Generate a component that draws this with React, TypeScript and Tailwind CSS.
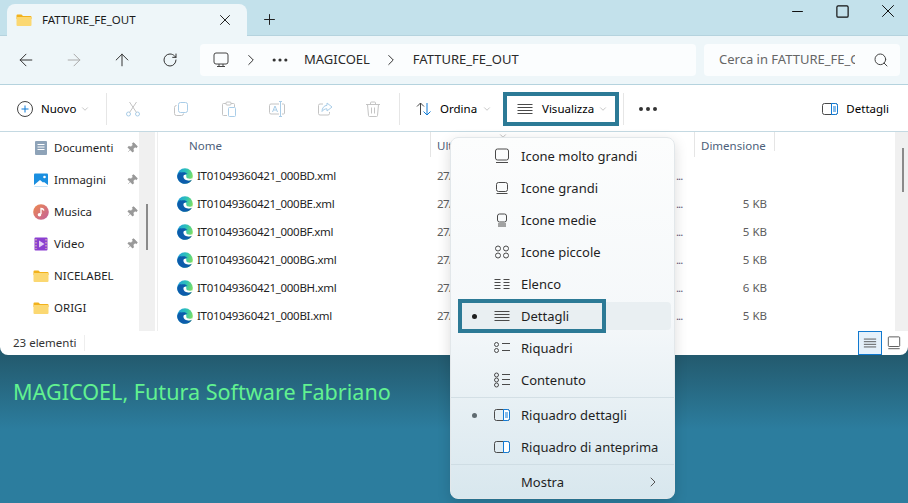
import { ReactNode } from 'react';
import {
  ArrowLeft,
  ArrowRight,
  ArrowUp,
  ChevronDown,
  ChevronRight,
  Ellipsis,
  Minus,
  Pin,
  Plus,
  RotateCw,
  Search,
  Square,
  X,
} from 'lucide-react';

const files = [
  { name: 'IT01049360421_000BD.xml', size: '' },
  { name: 'IT01049360421_000BE.xml', size: '5 KB' },
  { name: 'IT01049360421_000BF.xml', size: '5 KB' },
  { name: 'IT01049360421_000BG.xml', size: '5 KB' },
  { name: 'IT01049360421_000BH.xml', size: '6 KB' },
  { name: 'IT01049360421_000BI.xml', size: '5 KB' },
];

function Svg({ size = 16, children }: { size?: number; children: ReactNode }) {
  return (
    <svg width={size} height={size} viewBox="0 0 16 16" fill="none" stroke="#4a4a4a" strokeWidth="1" className="shrink-0">
      {children}
    </svg>
  );
}

function FolderIcon({ size = 16 }: { size?: number }) {
  return (
    <svg width={size} height={size} viewBox="0 0 16 16" className="shrink-0">
      <path d="M0.5 3.5a1 1 0 0 1 1-1h4l1.5 1.5h7.5a1 1 0 0 1 1 1V7H0.5z" fill="#f2b21c" />
      <rect x="0.5" y="5" width="15" height="9" rx="1" fill="#fbd872" />
    </svg>
  );
}

function EdgeIcon() {
  return (
    <svg width="16" height="16" viewBox="0 0 16 16" className="shrink-0">
      <defs>
        <linearGradient id="edgeTop" x1="0" y1="0.2" x2="1" y2="0.5">
          <stop offset="0" stopColor="#1f9fe0" />
          <stop offset="0.55" stopColor="#2fc4b4" />
          <stop offset="1" stopColor="#7fe060" />
        </linearGradient>
      </defs>
      <circle cx="8" cy="8" r="7.8" fill="url(#edgeTop)" />
      <path d="M0.2 8C0.2 12.5 3.8 15.8 8 15.8c3 0 5.5-1.6 6.9-4-1.5.8-3.5.9-5 .2-2-.9-3-3-2.3-4.6.5-1.2 1.8-1.8 3-1.6-1.6-1.6-4-2-6-1.2C2.5 3.6.8 5.5.2 8z" fill="#0c5cab" />
      <path d="M6.6 7.4c-.7 1.6.3 3.7 2.3 4.6 1.5.7 4.2.6 6-.2.4-.7.7-1.2.8-1.8-1 .7-3.2.9-4.4.6-1.5-.4-2.2-1.4-2-2.4.1-.6 0-1.1-.4-1.4-.8-.3-2 -.1-2.3.6z" fill="#ffffff" />
    </svg>
  );
}

// view mode glyphs used by the menu and the command bar
const DetailsGlyph = (
  <Svg>
    <path d="M0.5 3.5h15M0.5 6.5h15M0.5 9.5h15M0.5 12.5h15" />
  </Svg>
);

const PaneGlyph = ({ lines }: { lines?: boolean }) => (
  <Svg>
    <rect x="0.5" y="2.5" width="15" height="11" rx="2" />
    <path d="M9.5 2.5v11h4a2 2 0 0 0 2-2v-7a2 2 0 0 0-2-2z" fill="#fff" stroke="#0f7ad6" />
    {lines && <path d="M11 6h3M11 8h3M11 10h3" stroke="#0f7ad6" />}
  </Svg>
);

const menuViews: { label: string; icon: ReactNode; active?: boolean }[] = [
  {
    label: 'Icone molto grandi',
    icon: (
      <Svg>
        <rect x="1.5" y="1" width="13" height="11" rx="2" />
        <path d="M2 14.5h12" />
      </Svg>
    ),
  },
  {
    label: 'Icone grandi',
    icon: (
      <Svg>
        <rect x="2.5" y="2.5" width="11" height="9" rx="2" />
        <path d="M2.5 13.5h11" />
      </Svg>
    ),
  },
  {
    label: 'Icone medie',
    icon: (
      <Svg>
        <rect x="3.5" y="2" width="9" height="8" rx="2" />
        <path d="M4 12h8M4 14h8" />
      </Svg>
    ),
  },
  {
    label: 'Icone piccole',
    icon: (
      <Svg>
        <circle cx="4" cy="4.5" r="2.5" />
        <circle cx="12" cy="4.5" r="2.5" />
        <circle cx="4" cy="11.5" r="2.5" />
        <circle cx="12" cy="11.5" r="2.5" />
      </Svg>
    ),
  },
  {
    label: 'Elenco',
    icon: (
      <Svg>
        <path d="M0.5 3.5h6M0.5 6.5h6M0.5 9.5h6M0.5 12.5h6M9.5 3.5h6M9.5 6.5h6M9.5 9.5h6M9.5 12.5h6" />
      </Svg>
    ),
  },
  { label: 'Dettagli', icon: DetailsGlyph, active: true },
  {
    label: 'Riquadri',
    icon: (
      <Svg>
        <circle cx="2.5" cy="4.5" r="2" />
        <circle cx="2.5" cy="10.5" r="2" />
        <path d="M8 3.5h8M8 10.5h8" />
      </Svg>
    ),
  },
  {
    label: 'Contenuto',
    icon: (
      <Svg>
        <circle cx="2.5" cy="3" r="2" />
        <circle cx="2.5" cy="8" r="2" />
        <circle cx="2.5" cy="13" r="2" />
        <path d="M8 2.5h8M8 7.5h8M8 12.5h8" />
      </Svg>
    ),
  },
];

function MenuRow({ label, icon, dot, active }: { label: string; icon?: ReactNode; dot?: string; active?: boolean }) {
  return (
    <div className="h-8 py-0.5 pl-[7px] pr-[3px]">
      <div className={`flex h-7 items-center rounded ${active ? 'bg-[#e9eff2]' : ''}`}>
        <div className="w-[36px] flex justify-center pr-[3px]">
          {dot && <span className={`w-[5px] h-[5px] rounded-full ${dot}`} />}
        </div>
        <div className="w-4 flex justify-center">{icon}</div>
        <span className="ml-[11px] pt-[2px] text-[#1f1f1f]">{label}</span>
      </div>
    </div>
  );
}

function ViewMenu() {
  return (
    <div className="absolute left-[450px] top-[137px] w-[225px] h-[362px] rounded-lg border border-[#e2e7ea] bg-gradient-to-b from-[#fcfdfd] via-[#f5f8fa] to-[#d8e7ee] shadow-[0_4px_14px_rgba(0,0,0,0.14)] pt-[2px] text-[13px]">
      {menuViews.map((v) => (
        <MenuRow key={v.label} label={v.label} icon={v.icon} active={v.active} dot={v.active ? 'bg-[#1f1f1f]' : undefined} />
      ))}
      <div className="h-px bg-[#d3dfe5] mt-px mb-px" />
      <MenuRow label="Riquadro dettagli" icon={<PaneGlyph lines />} dot="bg-[#5f6a70]" />
      <MenuRow label="Riquadro di anteprima" icon={<PaneGlyph />} />
      <div className="h-px bg-[#cfdde4] mt-px mb-px" />
      <div className="relative">
        <MenuRow label="Mostra" />
        <ChevronRight size={16} strokeWidth={1} absoluteStrokeWidth color="#555" className="absolute right-[13px] top-[8px]" />
      </div>
      {/* highlight frame around the selected view */}
      <div className="absolute left-[7px] top-[161px] w-[148px] h-[34px] border-4 border-[#2c7a96]" />
    </div>
  );
}

function CommandIcon({ children }: { children: ReactNode }) {
  return <div className="w-12 flex justify-center">{children}</div>;
}

function CommandBar() {
  return (
    <div className="flex h-[47px] items-center border-b border-[#c4d9e2] bg-white pl-[17px] pt-px shrink-0">
      <svg width="16" height="16" viewBox="0 0 16 16" fill="none" className="shrink-0">
        <circle cx="8" cy="8" r="7.5" stroke="#444" />
        <path d="M8 4.5v7M4.5 8h7" stroke="#0f7ad6" />
      </svg>
      <span className="ml-2 w-[36px]">Nuovo</span>
      <ChevronDown size={10} strokeWidth={1} color="#777" className="ml-[3px]" />
      <div className="ml-[16px] w-px h-8 bg-[#e6e6e6]" />
      <div className="flex ml-[2px] w-[290px]">
        <CommandIcon>
          <svg width="16" height="16" viewBox="0 0 16 16" fill="none" stroke="#a9cde8">
            <circle cx="3.5" cy="13" r="2" />
            <circle cx="12.5" cy="13" r="2" />
            <path d="M4.5 11.5L11.5 1M11.5 11.5L4.5 1" stroke="#c4c4c4" />
          </svg>
        </CommandIcon>
        <CommandIcon>
          <svg width="16" height="16" viewBox="0 0 16 16" fill="none" stroke="#c4c4c4">
            <rect x="5.5" y="1.5" width="9" height="10" rx="2" stroke="#a9cde8" />
            <path d="M3.5 4.5A2 2 0 0 0 1.5 6.5v6a2 2 0 0 0 2 2h5a2 2 0 0 0 2-2" />
          </svg>
        </CommandIcon>
        <CommandIcon>
          <svg width="16" height="16" viewBox="0 0 16 16" fill="none" stroke="#c4c4c4">
            <path d="M5 2.5H2.5a1 1 0 0 0-1 1v10a1 1 0 0 0 1 1H6M10 2.5h2.5a1 1 0 0 1 1 1V6" />
            <rect x="5" y="1" width="5" height="3" rx="1" />
            <rect x="7.5" y="6.5" width="7" height="9" rx="1" stroke="#a9cde8" />
          </svg>
        </CommandIcon>
        <CommandIcon>
          <svg width="16" height="16" viewBox="0 0 16 16" fill="none" stroke="#c4c4c4">
            <path d="M10 3H2a1.5 1.5 0 0 0-1.5 1.5v7A1.5 1.5 0 0 0 2 13h8M13 3h1.5a1 1 0 0 1 1 1v8a1 1 0 0 1-1 1H13" />
            <path d="M11.5 1v14M10 .5h3M10 15.5h3" stroke="#a9cde8" />
            <path d="M3.5 11L6 5l2.5 6M4.5 9h3" stroke="#a9cde8" />
          </svg>
        </CommandIcon>
        <CommandIcon>
          <svg width="16" height="16" viewBox="0 0 16 16" fill="none" stroke="#c4c4c4">
            <path d="M6 3H3a1.5 1.5 0 0 0-1.5 1.5v8A1.5 1.5 0 0 0 3 14h8a1.5 1.5 0 0 0 1.5-1.5V11" />
            <path d="M10 2l5 4-5 4V7.8C7.5 7.8 6 9 5 10.5 5 7 7 4.6 10 4.3z" stroke="#a9cde8" />
          </svg>
        </CommandIcon>
        <CommandIcon>
          <svg width="16" height="16" viewBox="0 0 16 16" fill="none" stroke="#c4c4c4">
            <path d="M1 3.5h14M5.5 3.5V2a1 1 0 0 1 1-1h3a1 1 0 0 1 1 1v1.5M2.5 3.5l1 11a1 1 0 0 0 1 1h7a1 1 0 0 0 1-1l1-11M6.5 6.5v6M9.5 6.5v6" />
          </svg>
        </CommandIcon>
      </div>
      <div className="w-px h-8 bg-[#e6e6e6]" />
      <div className="ml-[16px] flex items-center">
        <svg width="16" height="16" viewBox="0 0 16 16" fill="none">
          <path d="M4.5 14V2M1 5.5L4.5 2 8 5.5" stroke="#444" />
          <path d="M11 2v12M7.5 10.5L11 14l3.5-3.5" stroke="#0f7ad6" />
        </svg>
        <span className="ml-2 w-[38px]">Ordina</span>
        <ChevronDown size={10} strokeWidth={1} color="#777" className="ml-[4px]" />
      </div>
      <div className="ml-[11px] flex h-[34px] w-[116px] items-center border-4 border-[#2c7a96] pl-[10px]">
        {DetailsGlyph}
        <span className="ml-[9px] w-[52px]">Visualizza</span>
        <ChevronDown size={10} strokeWidth={1} color="#777" className="ml-[4px]" />
      </div>
      <div className="ml-[4px] w-px h-8 bg-[#e6e6e6]" />
      <Ellipsis size={24} strokeWidth={2} absoluteStrokeWidth color="#333" className="ml-[12px]" />
      <div className="ml-auto mr-[19px] flex items-center">
        <PaneGlyph lines />
        <span className="ml-2">Dettagli</span>
      </div>
    </div>
  );
}

function Sidebar() {
  const items: { label: string; icon: ReactNode; pin?: boolean }[] = [
    {
      label: 'Documenti',
      pin: true,
      icon: (
        <svg width="16" height="16" viewBox="0 0 16 16">
          <rect x="2" y="1" width="12" height="14" rx="1" fill="#8ea3b8" />
          <path d="M4.5 4.5h7M4.5 7h7M4.5 9.5h7" stroke="#fff" />
        </svg>
      ),
    },
    {
      label: 'Immagini',
      pin: true,
      icon: (
        <svg width="16" height="16" viewBox="0 0 16 16">
          <rect x="1" y="1.5" width="14" height="13" rx="1" fill="#1a8fe0" />
          <path d="M1 13l6-5 3 2.5 1-.5 4 3v1.5H1z" fill="#fff" />
          <circle cx="11.5" cy="5" r="1.3" fill="#fff" />
        </svg>
      ),
    },
    {
      label: 'Musica',
      pin: true,
      icon: (
        <svg width="16" height="16" viewBox="0 0 16 16">
          <defs>
            <linearGradient id="musicFill" x1="0" y1="0" x2="1" y2="1">
              <stop offset="0" stopColor="#ee8a4e" />
              <stop offset="1" stopColor="#c25f9c" />
            </linearGradient>
          </defs>
          <circle cx="8" cy="8" r="7.8" fill="url(#musicFill)" />
          <path d="M8 10V4.5c1.5 0 2.5.8 3 2" stroke="#fff" fill="none" strokeWidth="1.3" />
          <circle cx="6.5" cy="10.8" r="1.8" fill="#fff" />
        </svg>
      ),
    },
    {
      label: 'Video',
      pin: true,
      icon: (
        <svg width="16" height="16" viewBox="0 0 16 16">
          <rect x="1.5" y="1.5" width="13" height="13" rx="1" fill="#8b3fd1" />
          <path d="M6 4.5l5.5 3.5L6 11.5z" fill="#e4cff6" />
          <path d="M3 3v10M13 3v10" stroke="#f0d9a0" strokeDasharray="1.5 1.5" />
        </svg>
      ),
    },
    { label: 'NICELABEL', icon: <FolderIcon /> },
    { label: 'ORIGI', icon: <FolderIcon /> },
  ];
  return (
    <div className="w-[139px] shrink-0">
      {items.map((item) => (
        <div key={item.label} className="flex h-8 items-center pl-[33px] text-[#1f1f1f]">
          {item.icon}
          <span className="ml-[5px] w-[70px]">{item.label}</span>
          {item.pin && <Pin size={12} strokeWidth={1} color="#8a8a8a" fill="#9a9a9a" className="ml-[2px] rotate-45" />}
        </div>
      ))}
    </div>
  );
}

function FileList() {
  return (
    <div className="flex-1 min-w-0">
      <div className="flex h-[25px] text-[#4c607a]">
        <div className="w-[273px] border-r border-[#e5e5e5] pl-[31px] pt-[5px]">Nome</div>
        <div className="w-[264px] border-r border-[#e5e5e5] pl-[6px] pt-[5px]">Ult</div>
        <div className="w-[80px] h-[19px] border-r border-[#e5e5e5] pl-[6px] pt-[5px]">Dimensione</div>
      </div>
      <div className="pt-[5px]">
        {files.map((f) => (
          <div key={f.name} className="flex h-7 items-center pl-[19px]">
            <EdgeIcon />
            <span className="ml-[4px] w-[240px] tracking-[-0.3px] text-[#1f1f1f]">{f.name}</span>
            <span className="w-[239px] tracking-[-0.6px] text-[#5d5d5d]">27/</span>
            <span className="w-[20px] tracking-[-1px] text-[#6b5d7a]">...</span>
            <span className="w-[71px] text-right text-[#5d5d5d]">{f.size}</span>
          </div>
        ))}
      </div>
    </div>
  );
}

export default function App() {
  return (
    <div
      className="relative flex h-[503px] w-[908px] flex-col overflow-hidden bg-[#2c7d9e] text-[11.5px]"
      style={{ fontFamily: '"Noto Sans", "Open Sans", sans-serif' }}
    >
      <div className="h-[355px] shrink-0 bg-[#235a6e]">
        <div className="flex h-full flex-col rounded-b-lg bg-white overflow-hidden">
          {/* title bar */}
          <div className="flex h-9 shrink-0 items-end bg-[#c3e1eb] pl-[7px] border-b border-[#b5d3de]">
            <div className="flex h-[32px] w-[240px] items-center rounded-t-lg bg-[#eef6f9] pl-[9px] -mb-px">
              <FolderIcon />
              <span className="ml-[10px] w-[174px] text-[#1a1a1a]">FATTURE_FE_OUT</span>
              <X size={18} strokeWidth={1} absoluteStrokeWidth color="#222" />
            </div>
            <Plus size={17} strokeWidth={1} absoluteStrokeWidth color="#222" className="ml-[14px] mb-[7px]" />
            <div className="ml-auto flex h-[22px] items-center self-start pr-[9px]">
              <Minus size={17} strokeWidth={1} absoluteStrokeWidth color="#111" />
              <Square size={15} strokeWidth={1.2} absoluteStrokeWidth color="#111" className="ml-[29px]" />
              <X size={22} strokeWidth={1} absoluteStrokeWidth color="#111" className="ml-[27px]" />
            </div>
          </div>

          {/* navigation */}
          <div className="flex h-[49px] shrink-0 items-center bg-[#eef6f9] pl-[16px] border-b border-[#b5d3de] text-[13px]">
            <ArrowLeft size={20} strokeWidth={1} absoluteStrokeWidth color="#333" />
            <ArrowRight size={20} strokeWidth={1} absoluteStrokeWidth color="#aaa" className="ml-[28px]" />
            <ArrowUp size={20} strokeWidth={1} absoluteStrokeWidth color="#333" className="ml-[28px]" />
            <RotateCw size={16} strokeWidth={1} absoluteStrokeWidth color="#333" className="ml-[30px]" />
            <div className="ml-[22px] flex h-8 w-[496px] items-center rounded bg-[#fbfdfe] pl-[13px] text-[#2a2a2a]">
              <svg width="16" height="16" viewBox="0 0 16 16" fill="none" stroke="#444">
                <rect x="1" y="1" width="14" height="11" rx="2" />
                <path d="M4 14.5h8M6 12v2M10 12v2" />
              </svg>
              <ChevronRight size={18} strokeWidth={1} absoluteStrokeWidth color="#333" className="ml-[13px]" />
              <Ellipsis size={20} strokeWidth={1.5} absoluteStrokeWidth color="#333" className="ml-[10px]" />
              <span className="ml-[14px]">MAGICOEL</span>
              <ChevronRight size={18} strokeWidth={1} absoluteStrokeWidth color="#333" className="ml-[12px]" />
              <span className="ml-[13px]">FATTURE_FE_OUT</span>
            </div>
            <div className="ml-2 flex h-8 w-[196px] items-center rounded bg-[#fbfdfe] pl-[15px] text-[#666]">
              <span className="w-[136px] overflow-hidden whitespace-nowrap">Cerca in FATTURE_FE_O</span>
              <Search size={16} strokeWidth={1} absoluteStrokeWidth color="#444" className="ml-[18px]" />
            </div>
          </div>

          <CommandBar />

          {/* content */}
          <div className="flex h-[199px] shrink-0 overflow-hidden">
            <Sidebar />
            <div className="w-4 shrink-0 bg-[#f0f0f0] relative">
              <div className="absolute left-[7px] top-[72px] w-[2px] h-[46px] bg-[#8a8a8a]" />
            </div>
            <div className="w-[2px] shrink-0" />
            <div className="w-px shrink-0 bg-[#eeeeee]" />
            <FileList />
            <div className="w-[13px] shrink-0 bg-[#f0f0f0] relative">
              <div className="absolute left-[7px] top-[16px] w-[2px] h-[44px] bg-[#8a8a8a]" />
            </div>
          </div>

          {/* status bar */}
          <div className="flex h-[24px] shrink-0 items-center pl-[13px] text-[#333]">
            <span className="w-[71px]">23 elementi</span>
            <div className="w-px h-4 bg-[#eeeeee]" />
            <div className="ml-auto mr-[7px] flex items-center">
              <div className="flex h-[24px] w-[24px] items-center justify-center border border-[#1079d0] bg-[#e5f1fb]">
                <Svg size={14}>
                  <path d="M1 3.5h14M1 6.5h14M1 9.5h14M1 12.5h14" />
                </Svg>
              </div>
              <div className="ml-[5px]">
                <Svg size={14}>
                  <rect x="1.5" y="1" width="13" height="11" rx="1" />
                  <path d="M1.5 14.5h13" />
                </Svg>
              </div>
            </div>
          </div>
        </div>
      </div>

      <div className="flex-1 bg-gradient-to-b from-[#235a6e] to-[#2c7d9e] to-50% pl-[13px] pt-[22px] text-[21.6px] leading-[30px] text-[#62f290]">
        MAGICOEL, Futura Software Fabriano
      </div>

      <ChevronDown size={10} strokeWidth={1} color="#666" className="absolute left-[498px] top-[131px]" />
      <ViewMenu />
    </div>
  );
}
